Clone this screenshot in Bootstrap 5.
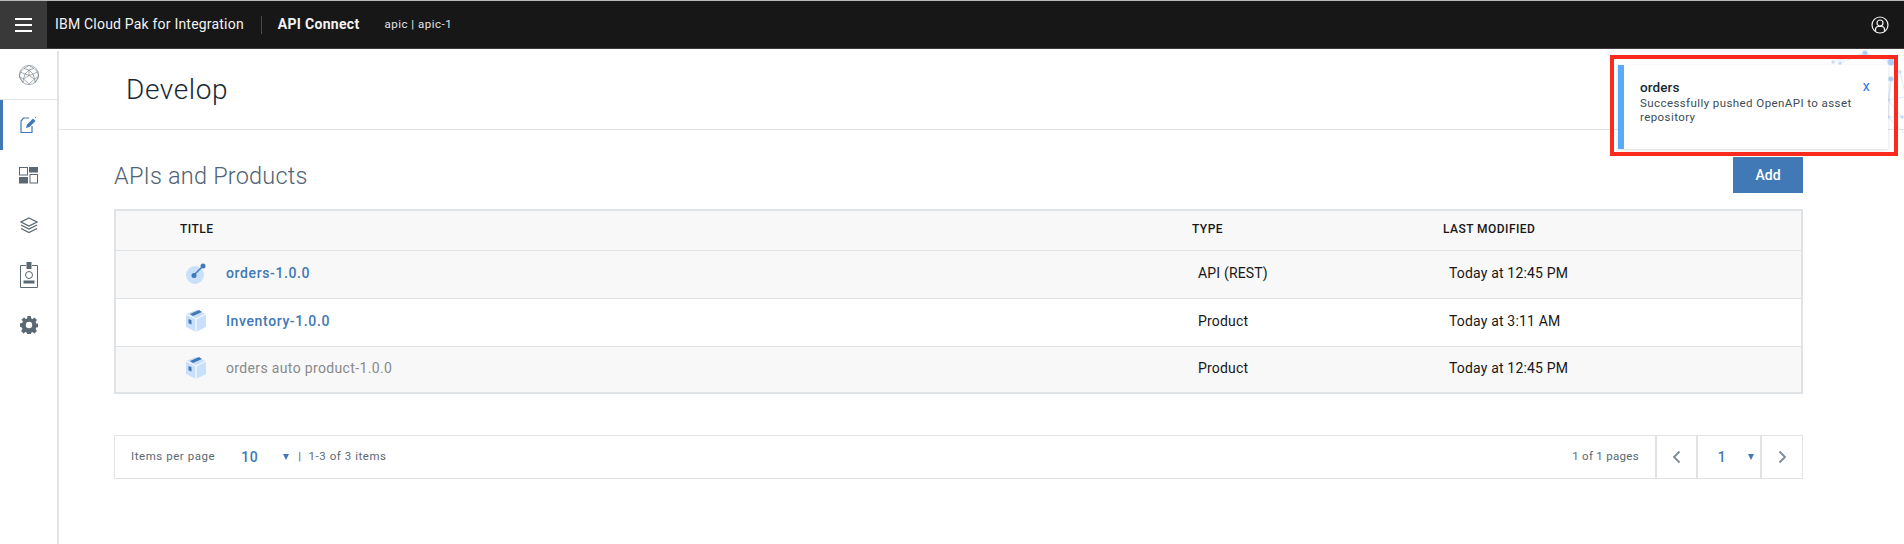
<!DOCTYPE html>
<html lang="en">

<head>
    <meta charset="UTF-8">
    <meta name="viewport" content="width=device-width, initial-scale=1.0">
    <title>API Connect - Develop</title>
    <link href="https://cdn.jsdelivr.net/npm/bootstrap@5.3.0/dist/css/bootstrap.min.css" rel="stylesheet">
    <style>
        html, body { height: 544px; overflow: hidden; }
        body { font-family: Roboto, "Noto Sans", sans-serif; color: #152935; background: #fff; position: relative; }

        .top-bar { height: 49px; background: #171717; border-top: 1px solid #b9b9b9; border-bottom: 1px solid #3a3a3a; color: #f3f3f3; }
        .menu-btn { width: 47px; height: 100%; background: #393939; border: 0; padding: 0; }
        .menu-btn span { display: block; width: 17px; height: 2px; background: #fff; margin: 2px auto; }
        .brand { font-size: 14px; margin-left: 8px; letter-spacing: .2px; }
        .brand-sep { width: 1px; height: 18px; background: #4a4a4a; margin: 0 16px 0 17px; }
        .product { font-size: 14px; font-weight: 700; letter-spacing: .3px; }
        .instance { font-size: 11.5px; margin-left: 25px; letter-spacing: .5px; color: #e4e4e4; }
        .user-ico { margin-right: 15px; }

        .side-rail { width: 59px; flex: 0 0 59px; border-right: 2px solid #dfe3e6; height: 495px; margin-top: 2px; }
        .rail-item { height: 50px; display: flex; align-items: center; justify-content: center; }
        .rail-logo { height: 49px; border-bottom: 1px solid #dfe3e6; }
        .rail-active { box-shadow: inset 3px 0 0 #4178b6; }

        .page-head { height: 81px; border-bottom: 1px solid #dfe3e6; padding: 24px 0 0 67px; }
        .page-head h1 { font-size: 28px; font-weight: 300; margin: 0; line-height: 34px; color: #152935; letter-spacing: .6px; }
        .content-wrap { padding: 27px 101px 0 55px; }
        .section-title { font-size: 23.5px; font-weight: 300; color: #4f6373; margin: 2px 0 0; letter-spacing: .2px; }
        .add-btn { background: #4178b6; color: #fff; border: 0; border-radius: 0; width: 70px; height: 36px; font-size: 14px; font-weight: 500; padding: 0; }
        .title-row { height: 36px; margin-bottom: 16px; }

        .api-table { border: 2px solid #dfe3e6; }
        .api-table .table { margin: 0; font-size: 14px; table-layout: fixed; --bs-table-bg: transparent; color: #171717; }
        .api-table th { font-size: 12px; font-weight: 500; letter-spacing: .45px; height: 39px; vertical-align: middle; padding: 0 0 2px; color: #171717; border-bottom: 1px solid #dfe3e6; background: #f8f8f8; }
        .api-table td { height: 48px; vertical-align: middle; padding: 0 0 2px; border-bottom: 1px solid #dfe3e6; letter-spacing: .17px; }
        .api-table tr:last-child td { border-bottom: 0; height: 46px; }
        .api-table tr.shade td { background: #f8f8f8; }
        .col-pad { width: 64px; }
        .col-title { width: 1012px; }
        .col-type { width: 251px; }
        .item-cell { display: flex; align-items: center; }
        .item-cell svg { margin: 0 19px 0 5px; flex: none; }
        .item-link { color: #4178b6; font-weight: 500; text-decoration: none; letter-spacing: .62px; }
        .item-off { color: #8a8a8a; letter-spacing: .35px; }
        .cell-in { padding-left: 6px; }

        .pager-bar { margin-top: 41px; height: 44px; border: 1px solid #e3e3e3; font-size: 11.5px; color: #5a6872; letter-spacing: .3px; }
        .pager-left { padding-left: 16px; letter-spacing: .55px; }
        .per-num { font-size: 14px; font-weight: 500; color: #4178b6; margin: 0 26px 0 26px; width: 16px; }
        .caret-down { width: 0; height: 0; border-left: 3.5px solid transparent; border-right: 3.5px solid transparent; border-top: 6px solid #4178b6; display: inline-block; }
        .per-sep { margin: 0 7px 0 9px; }
        .pager-cell { height: 100%; border-left: 2px solid #dfe3e6; display: flex; align-items: center; justify-content: center; }
        .pager-prev { width: 41px; margin-left: 16px; }
        .pager-page { width: 64px; position: relative; color: #4178b6; font-size: 14px; font-weight: 500; padding-right: 14px; }
        .pager-page .caret-down { position: absolute; right: 6px; top: 18px; }
        .pager-next { width: 42px; }

        .net-art { position: absolute; left: 1830px; top: 49px; width: 74px; height: 90px; }
        .note-frame { position: absolute; left: 1610px; top: 55px; width: 288px; height: 101px; border: 4px solid #fb2a1e; }
        .note-box { position: absolute; left: 1618px; top: 65px; width: 270px; height: 84px; background: #fff; border-left: 6px solid #5aaafa; box-shadow: 0 1px 3px rgba(0,0,0,.15); padding: 14px 16px 0 16px; font-size: 11.5px; line-height: 14px; color: #3d4b55; letter-spacing: .42px; }
        .note-box b { display: block; font-size: 13.5px; font-weight: 500; color: #152935; line-height: 17px; letter-spacing: .1px; }
        .note-close { position: absolute; right: 18px; top: 13px; color: #2f6fe4; font-size: 14px; line-height: 16px; }
    </style>
</head>

<body>
    <header class="top-bar d-flex align-items-center">
        <button class="menu-btn d-flex flex-column justify-content-center" aria-label="Menu"><span></span><span></span><span></span></button>
        <span class="brand">IBM Cloud Pak for Integration</span>
        <span class="brand-sep"></span>
        <span class="product">API Connect</span>
        <span class="instance">apic | apic-1</span>
        <svg class="user-ico ms-auto" width="18" height="18" viewBox="0 0 18 18" fill="none" stroke="#f3f3f3" stroke-width="1.2">
            <circle cx="9" cy="9" r="8"/><circle cx="9" cy="7" r="3"/><path d="M4.500 15v-1.500c0-2 1.500-3 3-3h3c1.500 0 3 1 3 3V15"/>
        </svg>
    </header>

    <div class="d-flex">
        <nav class="side-rail">
            <div class="rail-item rail-logo">
                <svg width="22" height="22" viewBox="0 0 22 22" fill="none" stroke="#6d7a84" stroke-width=".6">
                    <circle cx="11" cy="11" r="9.600"/>
                    <path d="M11 1.400 6 4.500 11 6l5-1.500zM6 4.500 2.500 8 7 10 11 6l4 4 4.500-2L16 4.500M2.500 8 1.500 12.500 5.500 15 7 10l4 1.500L15 10l1.500 5 4-2.500L19.500 8M5.500 15l5.500-3.500 5.500 3.500-5.500 5zM5.500 15 5 18.500M16.500 15l.5 3.500M11 11.500V6M1.500 12.500 5 18.500M20.500 12.500 17 18.500"/>
                </svg>
            </div>
            <div class="rail-item rail-active">
                <svg width="18" height="18" viewBox="0 0 18 18" fill="none">
                    <path d="M9 2H3.500L1 5v11.500h11V10" stroke="#4178b6" stroke-width="1.200"/>
                    <path d="M6 12l1-3.500L13 2.500l2.500 2.500-6 6z" fill="#4178b6"/>
                    <path d="M15 1l1 .8" stroke="#4178b6"/>
                </svg>
            </div>
            <div class="rail-item">
                <svg width="19" height="17" viewBox="0 0 19 17" fill="none" stroke="#5a6872">
                    <rect x=".5" y=".5" width="8" height="7.500"/><rect x="10.500" y=".5" width="8" height="4.500" fill="#5a6872"/>
                    <rect x=".5" y="10.500" width="8" height="5.500" fill="#5a6872"/><rect x="11" y="7.500" width="7.500" height="8.500"/>
                </svg>
            </div>
            <div class="rail-item">
                <svg width="18" height="17" viewBox="0 0 18 17" fill="none" stroke="#5a6872" stroke-width="1.300">
                    <path d="M9 1 17 5 9 9 1 5z"/><path d="M1 8l8 4 8-4"/><path d="M1 11.500l8 4 8-4"/>
                </svg>
            </div>
            <div class="rail-item">
                <svg width="18" height="26" viewBox="0 0 18 26" fill="none" stroke="#5a6872">
                    <path d="M6 3.500H.5v22h17v-22H12"/><rect x="7" y=".5" width="4" height="6" fill="#5a6872"/>
                    <circle cx="9" cy="13" r="3.500"/><rect x="4" y="19" width="10" height="2" fill="#5a6872"/>
                </svg>
            </div>
            <div class="rail-item">
                <svg width="18" height="18" viewBox="0 0 18 18">
                    <path fill="#5a6872" fill-rule="evenodd" d="M7.300 0h3.400l.4 2.300 1.500.6 1.900-1.300 2.400 2.400-1.300 1.900.6 1.500 2.300.4v3.400l-2.300.4-.6 1.500 1.300 1.900-2.400 2.400-1.900-1.300-1.500.6-.4 2.300H7.300l-.4-2.300-1.500-.6-1.900 1.300-2.400-2.400 1.300-1.900-.6-1.500L0 10.700V7.300l2.300-.4.6-1.500-1.300-1.900L4 1.600l1.900 1.300 1.500-.6zM9 5.800a3.200 3.200 0 1 0 0 6.400 3.200 3.200 0 0 0 0-6.400z"/>
                </svg>
            </div>
        </nav>

        <main class="flex-grow-1">
            <div class="page-head"><h1>Develop</h1></div>
            <div class="content-wrap">
                <div class="title-row d-flex justify-content-between align-items-center">
                    <h2 class="section-title">APIs and Products</h2>
                    <button class="add-btn">Add</button>
                </div>

                <div class="api-table">
                    <table class="table">
                        <thead>
                            <tr>
                                <th class="col-pad"></th>
                                <th class="col-title">TITLE</th>
                                <th class="col-type">TYPE</th>
                                <th>LAST MODIFIED</th>
                            </tr>
                        </thead>
                        <tbody>
                            <tr class="shade">
                                <td></td>
                                <td>
                                    <div class="item-cell">
                                        <svg width="22" height="22" viewBox="0 0 22 22">
                                            <circle cx="10" cy="13" r="9" fill="#c8e0fb"/>
                                            <path d="M9 13l9-9" stroke="#4178b6" stroke-width="1.500"/>
                                            <circle cx="9" cy="13.500" r="2.500" fill="#4178b6"/><circle cx="18" cy="4" r="2.500" fill="#4178b6"/>
                                        </svg>
                                        <a class="item-link" href="#">orders-1.0.0</a>
                                    </div>
                                </td>
                                <td><div class="cell-in">API (REST)</div></td>
                                <td><div class="cell-in">Today at 12:45 PM</div></td>
                            </tr>
                            <tr>
                                <td></td>
                                <td>
                                    <div class="item-cell">
                                        <svg width="22" height="22" viewBox="0 0 22 22">
                                            <path d="M11 0l10 4v13l-10 5L1 17V4z" fill="#c8e0fb"/>
                                            <path d="M1 4l10 5 10-5" stroke="#fff" fill="none"/><path d="M11 9v13" stroke="#fff"/>
                                            <path d="M5 4l9-4 3 2-9 4zM3.500 9l3 1.200v4.300l-3-1.300z" fill="#4178b6"/>
                                        </svg>
                                        <a class="item-link" href="#">Inventory-1.0.0</a>
                                    </div>
                                </td>
                                <td><div class="cell-in">Product</div></td>
                                <td><div class="cell-in">Today at 3:11 AM</div></td>
                            </tr>
                            <tr class="shade">
                                <td></td>
                                <td>
                                    <div class="item-cell">
                                        <svg width="22" height="22" viewBox="0 0 22 22">
                                            <path d="M11 0l10 4v13l-10 5L1 17V4z" fill="#c8e0fb"/>
                                            <path d="M1 4l10 5 10-5" stroke="#fff" fill="none"/><path d="M11 9v13" stroke="#fff"/>
                                            <path d="M5 4l9-4 3 2-9 4zM3.500 9l3 1.200v4.300l-3-1.300z" fill="#4178b6"/>
                                        </svg>
                                        <span class="item-off">orders auto product-1.0.0</span>
                                    </div>
                                </td>
                                <td><div class="cell-in">Product</div></td>
                                <td><div class="cell-in">Today at 12:45 PM</div></td>
                            </tr>
                        </tbody>
                    </table>
                </div>

                <div class="pager-bar d-flex align-items-center">
                    <div class="pager-left d-flex align-items-center">
                        <span>Items per page</span>
                        <span class="per-num">10</span>
                        <span class="caret-down"></span>
                        <span class="per-sep">|</span>
                        <span>1-3 of 3 items</span>
                    </div>
                    <span class="ms-auto">1 of 1 pages</span>
                    <div class="pager-cell pager-prev">
                        <svg width="9" height="14" viewBox="0 0 9 14" fill="none" stroke="#7b8a96" stroke-width="1.800"><path d="M7.500 1.500 2 7l5.500 5.500"/></svg>
                    </div>
                    <div class="pager-cell pager-page">1<span class="caret-down"></span></div>
                    <div class="pager-cell pager-next">
                        <svg width="9" height="14" viewBox="0 0 9 14" fill="none" stroke="#7b8a96" stroke-width="1.800"><path d="M1.500 1.500 7 7l-5.500 5.500"/></svg>
                    </div>
                </div>
            </div>
        </main>
    </div>

    <!-- network art peeking out behind the toast -->
    <svg class="net-art" viewBox="0 0 74 90" fill="#c5dcf7" stroke="#d3e4f9" stroke-width=".8">
        <path d="M3 13 35 4 61 13M10 14 35 4M61 13 70 23 61 30 58 51 72 68 58 68 61 30M70 23 74 40M58 51 74 48M58 68 74 84" fill="none"/>
        <circle cx="35" cy="4" r="2.500" fill="#a9cdf5"/><circle cx="3" cy="13" r="1.500"/><circle cx="10" cy="14" r="1.500"/>
        <circle cx="61" cy="13" r="3.500" fill="#a9cdf5"/><circle cx="61" cy="30" r="2.500" fill="#a9cdf5"/><circle cx="58" cy="51" r="1.500"/>
        <circle cx="72" cy="68" r="1.500"/><circle cx="58" cy="68" r="1.500"/><circle cx="70" cy="23" r="1.500"/>
    </svg>

    <div class="note-frame"></div>
    <div class="note-box">
        <b>orders</b>
        Successfully pushed OpenAPI to asset<br>repository
        <span class="note-close">x</span>
    </div>

    <script src="https://cdn.jsdelivr.net/npm/bootstrap@5.3.0/dist/js/bootstrap.bundle.min.js"></script>
</body>

</html>
